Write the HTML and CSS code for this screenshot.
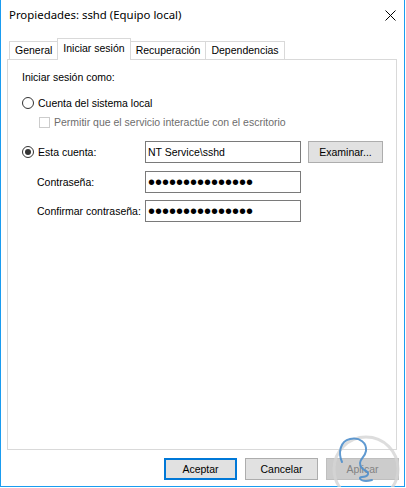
FILE: index.html
```html
<!DOCTYPE html>
<html lang="es">
<head>
<meta charset="utf-8">
<title>Propiedades: sshd (Equipo local)</title>
<link rel="stylesheet" href="styles.css">
</head>
<body>
<div class="window">
  <div class="titlebar">
    <span class="title">Propiedades: sshd (Equipo local)</span>
    <svg class="close" width="11" height="11" viewBox="0 0 11 11"><path d="M0.5 0.5 L10.5 10.5 M10.5 0.5 L0.5 10.5" stroke="#000" stroke-width="1" fill="none"/></svg>
  </div>
  <div class="tabs">
    <div class="tab">General</div>
    <div class="tab active">Iniciar sesión</div>
    <div class="tab">Recuperación</div>
    <div class="tab">Dependencias</div>
  </div>
  <div class="panel">
    <div class="heading">Iniciar sesión como:</div>
    <div class="row row-local">
      <span class="radio"></span>
      <span>Cuenta del sistema local</span>
    </div>
    <div class="row row-check">
      <span class="check"></span>
      <span class="disabled">Permitir que el servicio interactúe con el escritorio</span>
    </div>
    <div class="row field row-account">
      <div class="label"><span class="radio checked"></span><span>Esta cuenta:</span></div>
      <div class="input">NT Service\sshd</div>
      <button class="btn browse">Examinar...</button>
    </div>
    <div class="row field row-pass">
      <div class="label plain">Contraseña:</div>
      <div class="input dots">•••••••••••••••</div>
    </div>
    <div class="row field row-confirm">
      <div class="label plain">Confirmar contraseña:</div>
      <div class="input dots">•••••••••••••••</div>
    </div>
  </div>
  <div class="footer">
    <button class="btn default">Aceptar</button>
    <button class="btn">Cancelar</button>
    <button class="btn off">Aplicar</button>
  </div>
  <svg class="watermark" width="80" height="70" viewBox="0 0 80 70">
    <circle cx="42" cy="52" r="32" fill="none" stroke="#d4d4d4" stroke-width="3" opacity="0.8"/>
    <path d="M18 45 C14 36 16 24 26 22 C36 20 43 26 42 34 C41 40 36 42 36 46 C36 50 38 52 42 54 C46 56 44 60 38 60 C34 60 36 64 42 64 C46 64 47 63 48 63" fill="none" stroke="#4f8fcc" stroke-width="2" stroke-linecap="round" opacity="0.9"/>
  </svg>
</div>
</body>
</html>
```
FILE: styles.css
```css
* { box-sizing: border-box; }
html, body { margin: 0; padding: 0; background: #fff; }
body {
  width: 406px;
  height: 488px;
  font-family: "Liberation Sans", Arial, sans-serif;
  font-size: 10.5px;
  line-height: 13px;
  color: #000;
  overflow: hidden;
}
.window {
  position: relative;
  width: 405px;
  height: 487px;
  border: 1px solid #1a9cf0;
  border-top: none;
  display: flex;
  flex-direction: column;
  background: #fff;
}
.titlebar {
  height: 38px;
  display: flex;
  justify-content: space-between;
  align-items: flex-start;
  padding: 7px 8px 0 8px;
}
.title {
  font-family: "Noto Sans", "Open Sans", sans-serif;
  font-size: 11.4px;
  line-height: 16px;
  color: #000;
}
.close { margin-top: 3px; display: block; }
.tabs {
  height: 21px;
  display: flex;
  align-items: flex-end;
  padding-left: 8px;
  position: relative;
  z-index: 1;
}
.tab {
  height: 18px;
  padding: 0 5px;
  border: 1px solid #d9d9d9;
  border-bottom: none;
  margin-left: -1px;
  display: flex;
  align-items: center;
  background: #fff;
  white-space: nowrap;
}
.tab:first-child { margin-left: 0; }
.tab.active {
  height: 22px;
  margin-bottom: -1px;
  padding-bottom: 2px;
  position: relative;
  z-index: 2;
}
.panel {
  height: 391px;
  margin: 0 7px 0 6px;
  border: 1px solid #d9d9d9;
  padding: 11px 0 0 14px;
  display: flex;
  flex-direction: column;
}
.row {
  display: flex;
  align-items: center;
  height: 16px;
  white-space: nowrap;
}
.row-local { margin-top: 11px; gap: 4px; }
.row-check { margin-top: 3px; padding-left: 17px; gap: 4px; }
.field { height: 22px; }
.row-account { margin-top: 11px; }
.row-pass { margin-top: 8px; }
.row-confirm { margin-top: 7px; }
.radio {
  width: 12px;
  height: 12px;
  border: 1px solid #333;
  border-radius: 50%;
  background: #fff;
  display: flex;
  align-items: center;
  justify-content: center;
  flex: none;
}
.radio.checked::after {
  content: "";
  width: 6px;
  height: 6px;
  border-radius: 50%;
  background: #333;
}
.check {
  width: 11px;
  height: 11px;
  border: 1px solid #cccccc;
  background: #fff;
  flex: none;
}
.disabled { color: #6d6d6d; }
.label {
  width: 123px;
  display: flex;
  align-items: center;
  gap: 4px;
}
.label.plain { padding-left: 15px; }
.input {
  width: 156px;
  height: 22px;
  border: 1px solid #7a7a7a;
  padding: 0 2px;
  display: flex;
  align-items: center;
  background: #fff;
}
.dots {
  font-size: 20px;
  line-height: 20px;
  padding-left: 2px;
  padding-bottom: 1px;
}
.btn {
  font-family: "Liberation Sans", Arial, sans-serif;
  font-size: 10.5px;
  line-height: 13px;
  color: #000;
  height: 22px;
  width: 73px;
  background: #e1e1e1;
  border: 1px solid #adadad;
  padding: 0;
  margin: 0;
}
.browse { width: 75px; margin-left: 7px; }
.footer {
  display: flex;
  justify-content: flex-end;
  gap: 8px;
  margin-top: 8px;
  padding-right: 5px;
}
.btn.default { border: 2px solid #0078d7; }
.btn.off { background: #cccccc; border-color: #bfbfbf; color: #838383; }
.watermark {
  position: absolute;
  right: 0;
  bottom: -1px;
  pointer-events: none;
}
```
